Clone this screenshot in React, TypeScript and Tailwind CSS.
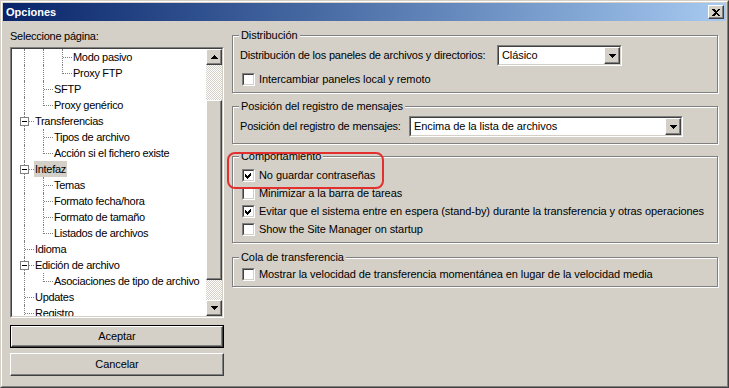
import React from "react";

type TreeRow = {
  label: string;
  level: number;
  last: boolean;
  expander?: boolean;
  selected?: boolean;
};

const rows: TreeRow[] = [
  { label: "Modo pasivo", level: 2, last: false },
  { label: "Proxy FTP", level: 2, last: true },
  { label: "SFTP", level: 1, last: false },
  { label: "Proxy genérico", level: 1, last: true },
  { label: "Transferencias", level: 0, last: false, expander: true },
  { label: "Tipos de archivo", level: 1, last: false },
  { label: "Acción si el fichero existe", level: 1, last: true },
  { label: "Intefaz", level: 0, last: false, expander: true, selected: true },
  { label: "Temas", level: 1, last: false },
  { label: "Formato fecha/hora", level: 1, last: false },
  { label: "Formato de tamaño", level: 1, last: false },
  { label: "Listados de archivos", level: 1, last: true },
  { label: "Idioma", level: 0, last: false },
  { label: "Edición de archivo", level: 0, last: false, expander: true },
  { label: "Asociaciones de tipo de archivo", level: 1, last: true },
  { label: "Updates", level: 0, last: false },
  { label: "Registro", level: 0, last: false },
];

const raised =
  "border border-t-white border-l-white border-b-[#404040] border-r-[#404040] shadow-[inset_-1px_-1px_0_#808080] bg-[#d4d0c8]";

const Arrow = ({ up }: { up?: boolean }) => (
  <svg width="7" height="4" viewBox="0 0 7 4" shapeRendering="crispEdges" className={up ? "rotate-180" : ""}>
    <rect x="0" y="0" width="7" height="1" fill="#000" />
    <rect x="1" y="1" width="5" height="1" fill="#000" />
    <rect x="2" y="2" width="3" height="1" fill="#000" />
    <rect x="3" y="3" width="1" height="1" fill="#000" />
  </svg>
);

const ArrowButton = ({ up, className }: { up?: boolean; className: string }) => (
  <div className={`${raised} ${className} flex items-center justify-center`}>
    <Arrow up={up} />
  </div>
);

const Checkbox = ({ checked }: { checked?: boolean }) => (
  <span className="block h-[13px] w-[13px] shrink-0 border border-t-[#808080] border-l-[#808080] border-b-white border-r-white">
    <span className="flex h-full w-full items-center justify-center border border-t-[#404040] border-l-[#404040] border-b-[#d4d0c8] border-r-[#d4d0c8] bg-white">
      {checked && (
        <svg width="7" height="7" viewBox="0 0 7 7" shapeRendering="crispEdges">
          <path d="M0 2 L2 4 L6 0 L6 3 L2 7 L0 5 Z" fill="#000" />
        </svg>
      )}
    </span>
  </span>
);

const CheckRow = ({ label, checked, className = "" }: { label: string; checked?: boolean; className?: string }) => (
  <div className={`ml-[2px] flex h-[13px] items-center gap-[4px] ${className}`}>
    <Checkbox checked={checked} />
    <span className="whitespace-nowrap">{label}</span>
  </div>
);

const Combo = ({ value, width }: { value: string; width: string }) => (
  <div className={`flex h-[21px] ${width} border border-t-[#808080] border-l-[#808080] border-b-white border-r-white`}>
    <div className="flex flex-1 items-center border border-t-[#404040] border-l-[#404040] border-b-[#d4d0c8] border-r-[#d4d0c8] bg-white">
      <span className="flex-1 pl-[3px] whitespace-nowrap">{value}</span>
      <ArrowButton className="h-full w-[16px]" />
    </div>
  </div>
);

const Group = ({ title, className, children }: { title: string; className: string; children: React.ReactNode }) => (
  <div className={`relative border border-[#808080] shadow-[inset_1px_1px_0_#fff,1px_1px_0_#fff] pl-[7px] ${className}`}>
    <span className="absolute left-[6px] top-[-7px] bg-[#d4d0c8] px-[2px] leading-[13px] whitespace-nowrap">{title}</span>
    {children}
  </div>
);

const TreeItem = ({ row }: { row: TreeRow }) => {
  const ancestors = Array.from({ length: row.level });
  return (
    <div className="flex h-[16px] shrink-0 items-center pl-[3px]">
      {ancestors.map((_, i) => (
        <div key={i} className="relative h-full w-[19px] shrink-0">
          <div className="absolute left-[9px] top-0 bottom-0 border-l border-dotted border-[#808080]" />
        </div>
      ))}
      <div className="relative h-full w-[19px] shrink-0">
        <div
          className={`absolute left-[9px] top-0 border-l border-dotted border-[#808080] ${row.last ? "h-[9px]" : "bottom-0"}`}
        />
        <div className="absolute left-[10px] right-0 top-[8px] border-t border-dotted border-[#808080]" />
        {row.expander && (
          <div className="absolute left-[5px] top-[4px] flex h-[9px] w-[9px] items-center justify-center border border-[#808080] bg-white">
            <div className="h-px w-[5px] bg-black" />
          </div>
        )}
      </div>
      <span
        className={`px-[1px] leading-[16px] tracking-[-0.3px] whitespace-nowrap ${row.selected ? "bg-[#d4d0c8]" : ""}`}
      >
        {row.label}
      </span>
    </div>
  );
};

export default function App() {
  return (
    <div className="relative h-[388px] w-[729px] overflow-hidden border border-t-[#d4d0c8] border-l-[#d4d0c8] border-b-[#404040] border-r-[#404040] bg-[#d4d0c8] font-['Liberation_Sans',Arial,sans-serif] text-[11px] leading-[13px] tracking-[-0.08px] text-black">
      <div className="flex h-full flex-col border border-t-white border-l-white border-b-[#808080] border-r-[#808080] p-px">
        <div className="flex h-[18px] shrink-0 items-center justify-between bg-linear-to-r from-[#0a246a] to-[#a6caf0] pl-[3px] pr-[2px]">
          <span className="font-bold tracking-normal text-white">Opciones</span>
          <div className={`${raised} flex h-[14px] w-[16px] items-center justify-center`}>
            <svg width="8" height="7" viewBox="0 0 8 7" shapeRendering="crispEdges">
              <path d="M0 0 H2 L4 2 L6 0 H8 L5 3.5 L8 7 H6 L4 5 L2 7 H0 L3 3.5 Z" fill="#000" />
            </svg>
          </div>
        </div>

        <div className="flex flex-1 pl-[7px]">
          <div className="flex w-[214px] shrink-0 flex-col pt-[9px]">
            <span className="h-[13px] tracking-[-0.25px]">Seleccione página:</span>
            <div className="mt-[4px] h-[271px] border border-t-[#808080] border-l-[#808080] border-b-white border-r-white">
              <div className="flex h-full border border-t-[#404040] border-l-[#404040] border-b-[#d4d0c8] border-r-[#d4d0c8] bg-white">
                <div className="flex flex-1 flex-col overflow-hidden">
                  {rows.map((r) => (
                    <TreeItem key={r.label} row={r} />
                  ))}
                </div>
                <div className="flex w-[16px] shrink-0 flex-col">
                  <ArrowButton up className="h-[16px] shrink-0" />
                  <div className="h-[35px] shrink-0 bg-[repeating-conic-gradient(#d4d0c8_0_25%,#ffffff_0_50%)] bg-[length:2px_2px]" />
                  <div className={`${raised} flex-1`} />
                  <div className="h-[20px] shrink-0 bg-[repeating-conic-gradient(#d4d0c8_0_25%,#ffffff_0_50%)] bg-[length:2px_2px]" />
                  <ArrowButton className="h-[16px] shrink-0" />
                </div>
              </div>
            </div>
            <div className="mt-[7px] h-[23px] border border-black">
              <div className={`${raised} flex h-full items-center justify-center`}>Aceptar</div>
            </div>
            <div className={`${raised} mt-[5px] flex h-[23px] items-center justify-center`}>Cancelar</div>
          </div>

          <div className="ml-[8px] flex w-[486px] shrink-0 flex-col pt-[14px]">
            <Group title="Distribución" className="h-[58px] pt-[9px]">
              <div className="flex items-center">
                <span className="w-[257px] shrink-0 tracking-[-0.2px] whitespace-nowrap">
                  Distribución de los paneles de archivos y directorios:
                </span>
                <Combo value="Clásico" width="w-[125px]" />
              </div>
              <CheckRow label="Intercambiar paneles local y remoto" className="mt-[7px]" />
            </Group>

            <Group title="Posición del registro de mensajes" className="mt-[13px] h-[38px] pt-[9px]">
              <div className="flex items-center">
                <span className="w-[169px] shrink-0 tracking-[-0.2px] whitespace-nowrap">Posición del registro de mensajes:</span>
                <Combo value="Encima de la lista de archivos" width="w-[274px]" />
              </div>
            </Group>

            <Group title="Comportamiento" className="mt-[12px] h-[87px] pt-[12px]">
              <div className="flex flex-col gap-[5px]">
                <CheckRow label="No guardar contraseñas" checked />
                <CheckRow label="Minimizar a la barra de tareas" />
                <CheckRow
                  label="Evitar que el sistema entre en espera (stand-by) durante la transferencia y otras operaciones"
                  checked
                />
                <CheckRow label="Show the Site Manager on startup" />
              </div>
            </Group>

            <Group title="Cola de transferencia" className="mt-[14px] h-[30px] pt-[10px]">
              <CheckRow label="Mostrar la velocidad de transferencia momentánea en lugar de la velocidad media" />
            </Group>
          </div>
        </div>
      </div>

      <div className="pointer-events-none absolute left-[226px] top-[151px] h-[37px] w-[157px] rounded-[8px] border-2 border-[#e3302f]" />
    </div>
  );
}
